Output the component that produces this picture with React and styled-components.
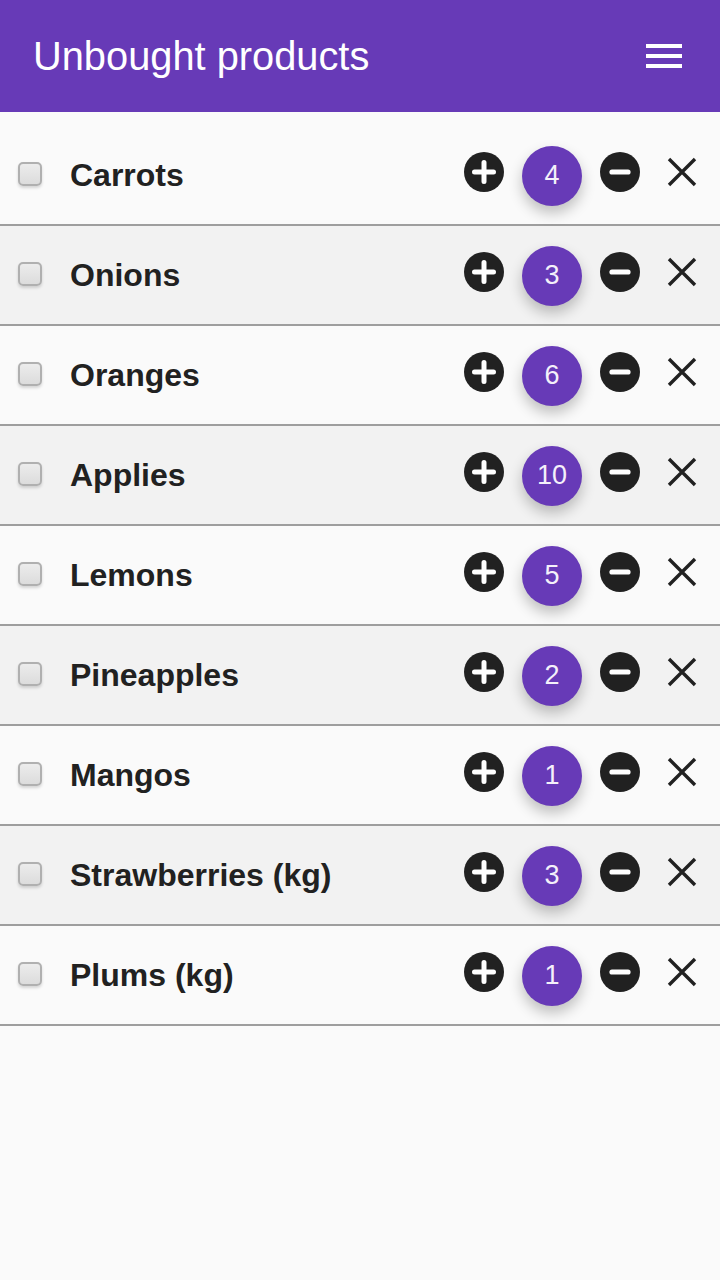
import React from 'react';
import styled, { createGlobalStyle } from 'styled-components';

const Global = createGlobalStyle`
  html, body {
    margin: 0;
    padding: 0;
    background: #fafafa;
  }
`;

const Page = styled.div`
  min-height: 1280px;
  background: #fafafa;
  font-family: "Liberation Sans", Arial, sans-serif;
`;

const Header = styled.header`
  height: 112px;
  background: #673ab7;
  display: flex;
  align-items: center;
  justify-content: space-between;
  padding: 0 38px 0 33px;
  box-sizing: border-box;
`;

const Title = styled.h1`
  margin: 0;
  color: #fff;
  font-size: 39.8px;
  font-weight: 400;
`;

const Burger = styled.div`
  width: 36px;
  display: flex;
  flex-direction: column;
  gap: 6px;
`;

const BurgerLine = styled.span`
  display: block;
  height: 4px;
  background: #fff;
`;

const List = styled.ul`
  list-style: none;
  margin: 0;
  padding: 14px 0 0;
`;

const Row = styled.li`
  height: 100px;
  box-sizing: border-box;
  border-bottom: 2px solid #9e9e9e;
  background: ${(p) => (p.$even ? '#f2f2f2' : '#fafafa')};
  display: flex;
  align-items: center;
  padding-left: 18px;
`;

const Check = styled.span`
  width: 24px;
  height: 24px;
  box-sizing: border-box;
  flex: none;
  border: 2px solid #b0b0b0;
  border-radius: 5px;
  background: linear-gradient(#ececec, #dcdcdc);
  box-shadow: 0 2px 3px rgba(0, 0, 0, 0.15);
  margin-top: -2px;
`;

const Name = styled.span`
  flex: 1;
  margin-left: 28px;
  font-size: 32px;
  font-weight: 700;
  color: #212121;
`;

const Controls = styled.div`
  display: flex;
  align-items: flex-start;
  width: 256px;
  margin-top: 2px;
  padding-right: 18px;
  box-sizing: border-box;
  flex: none;
`;

const IconSlot = styled.span`
  display: block;
  flex: none;
  width: 40px;
  height: 40px;
  margin: ${(p) => p.$margin || '6px 0 0'};
`;

const Count = styled.span`
  flex: none;
  width: 60px;
  height: 60px;
  margin: 0 18px;
  padding-bottom: 2px;
  box-sizing: border-box;
  border-radius: 50%;
  background: #673ab7;
  color: #f4f0fa;
  font-size: 27px;
  display: flex;
  align-items: center;
  justify-content: center;
  box-shadow: 0 7px 14px rgba(0, 0, 0, 0.24);
`;

const PlusIcon = () => (
  <svg width="40" height="40" viewBox="0 0 40 40">
    <circle cx="20" cy="20" r="20" fill="#212121" />
    <path d="M20 10.5v19M10.5 20h19" stroke="#fff" strokeWidth="5" strokeLinecap="round" />
  </svg>
);

const MinusIcon = () => (
  <svg width="40" height="40" viewBox="0 0 40 40">
    <circle cx="20" cy="20" r="20" fill="#212121" />
    <path d="M12 20h16" stroke="#fff" strokeWidth="5.2" strokeLinecap="round" />
  </svg>
);

const CloseIcon = () => (
  <svg width="40" height="40" viewBox="0 0 40 40">
    <path d="M7 7l26 26M33 7L7 33" stroke="#212121" strokeWidth="3.4" />
  </svg>
);

const products = [
  ['Carrots', 4],
  ['Onions', 3],
  ['Oranges', 6],
  ['Applies', 10],
  ['Lemons', 5],
  ['Pineapples', 2],
  ['Mangos', 1],
  ['Strawberries (kg)', 3],
  ['Plums (kg)', 1],
];

export default function App() {
  return (
    <Page>
      <Global />
      <Header>
        <Title>Unbought products</Title>
        <Burger>
          <BurgerLine />
          <BurgerLine />
          <BurgerLine />
        </Burger>
      </Header>
      <List>
        {products.map(([name, count], i) => (
          <Row key={name} $even={i % 2 === 1}>
            <Check />
            <Name>{name}</Name>
            <Controls>
              <IconSlot><PlusIcon /></IconSlot>
              <Count>{count}</Count>
              <IconSlot><MinusIcon /></IconSlot>
              <IconSlot $margin="6px 0 0 22px"><CloseIcon /></IconSlot>
            </Controls>
          </Row>
        ))}
      </List>
    </Page>
  );
}
